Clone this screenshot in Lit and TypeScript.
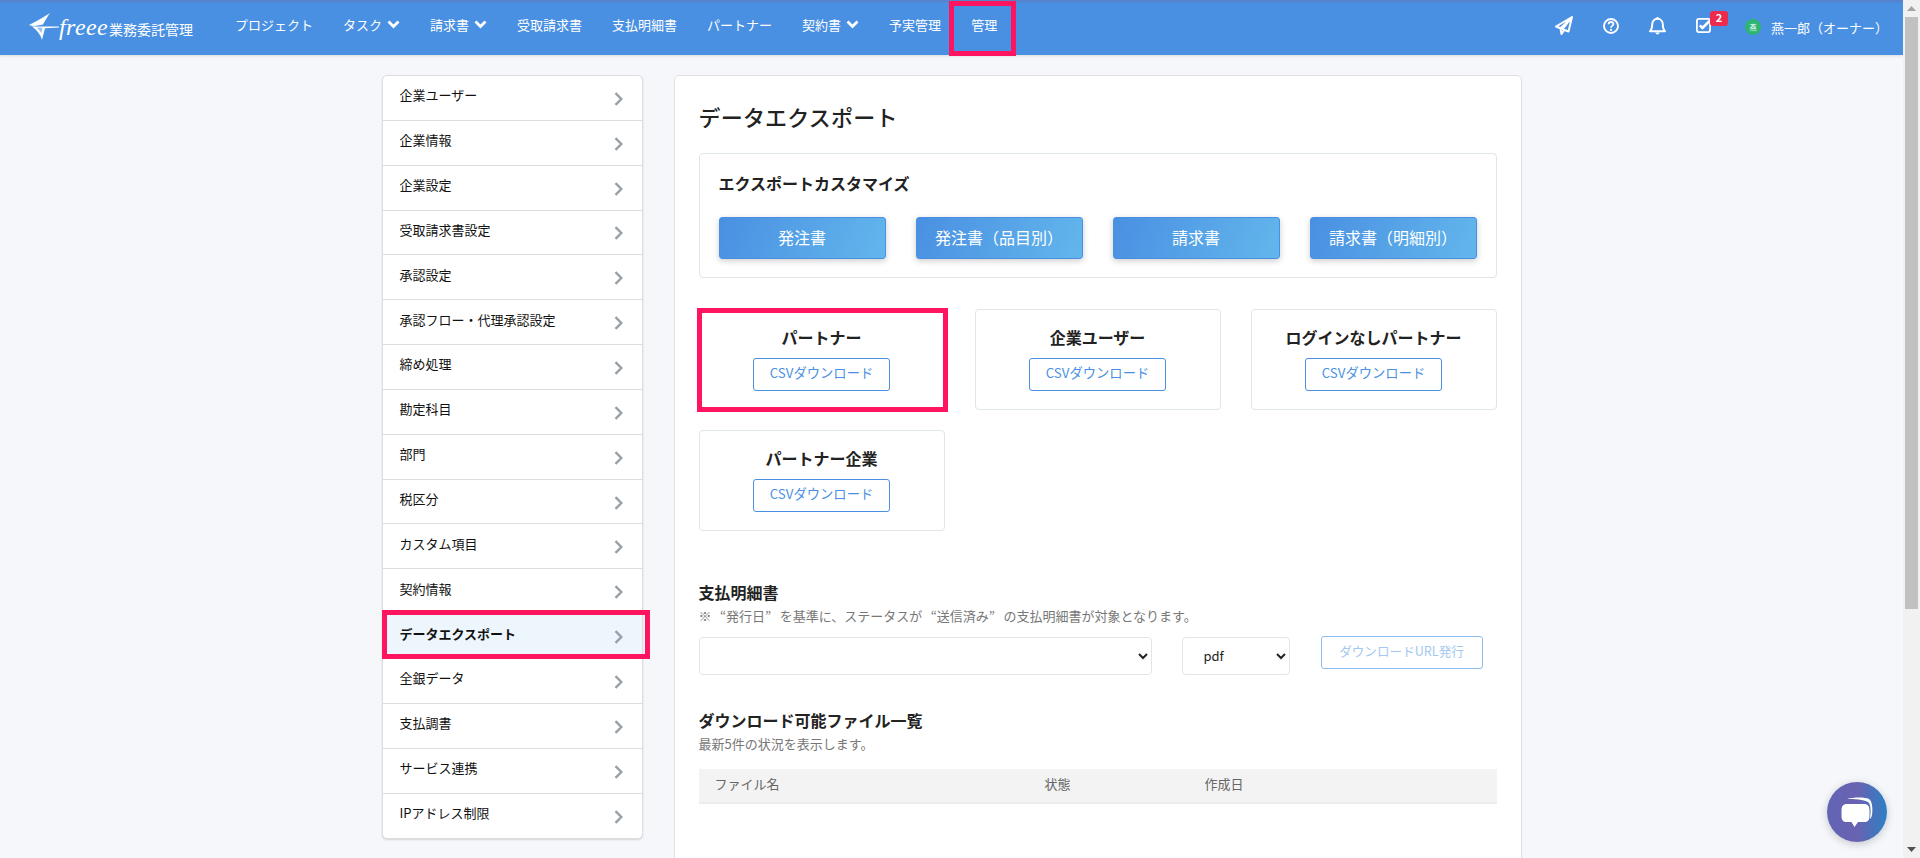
import { LitElement, html, css, svg } from 'lit';
import { customElement } from 'lit/decorators.js';

const NAV = [
  { label: 'プロジェクト' },
  { label: 'タスク', menu: true },
  { label: '請求書', menu: true },
  { label: '受取請求書' },
  { label: '支払明細書' },
  { label: 'パートナー' },
  { label: '契約書', menu: true },
  { label: '予実管理' },
  { label: '管理', marked: true },
];

const SIDE = [
  '企業ユーザー', '企業情報', '企業設定', '受取請求書設定', '承認設定',
  '承認フロー・代理承認設定', '締め処理', '勘定科目', '部門', '税区分',
  'カスタム項目', '契約情報', 'データエクスポート', '全銀データ', '支払調書',
  'サービス連携', 'IPアドレス制限',
];

const CUSTOM = ['発注書', '発注書（品目別）', '請求書', '請求書（明細別）'];
const EXPORTS = ['パートナー', '企業ユーザー', 'ログインなしパートナー', 'パートナー企業'];

const chevronDown = svg`<svg class="caret" width="13" height="9" viewBox="0 0 13 9"><path d="M1.500 1.500 6.500 6.500 11.500 1.500" fill="none" stroke="#fff" stroke-width="2.800"/></svg>`;
const chevronRight = svg`<svg class="arrow" width="9" height="14" viewBox="0 0 9 14"><path d="M1.500 1.200 7.300 7 1.500 12.800" fill="none" stroke="#98a0a8" stroke-width="2.400"/></svg>`;

@customElement('app-root')
export class AppRoot extends LitElement {
  static styles = css`
    :host {
      display: block;
      height: 100vh;
      overflow: hidden;
      font-family: "Noto Sans CJK JP", "Noto Sans", sans-serif;
      font-size: 13px;
      color: #222;
    }

    .page {
      display: flex;
      height: 100%;
      position: relative;
      background: #f5f7fb;
    }

    .content {
      flex: 1;
      min-width: 0;
      overflow: hidden;
    }

    .header {
      display: flex;
      align-items: center;
      height: 55px;
      background: linear-gradient(#5a7fc4 0, #4a8de0 3px, #4a90e2 5px);
      box-shadow: 0 1px 3px rgba(0, 0, 0, .12);
      color: #fff;
    }

    .logo {
      display: flex;
      align-items: center;
      width: 220px;
      padding-left: 29px;
      box-sizing: border-box;
      flex: none;
    }

    .logo svg {
      flex: none;
    }

    .freee {
      font-family: "Liberation Serif", serif;
      font-style: italic;
      font-size: 24px;
      line-height: 1;
      letter-spacing: .4px;
      width: 50px;
      margin-top: -1px;
    }

    .logo-name {
      font-size: 14px;
      line-height: 20px;
      margin-top: 2px;
    }

    .nav {
      display: flex;
      height: 100%;
    }

    .nav-item {
      display: flex;
      align-items: center;
      gap: 5px;
      padding: 0 15px 6px;
      position: relative;
      height: 55px;
      box-sizing: border-box;
      white-space: nowrap;
    }

    .mark {
      position: absolute;
      border: 5px solid #ff1460;
      box-sizing: border-box;
      pointer-events: none;
    }

    .nav-item .mark {
      left: -7px;
      right: -4px;
      top: 1px;
      bottom: -1px;
    }

    .tools {
      display: flex;
      align-items: center;
      gap: 30px;
      margin-left: auto;
      padding: 0 15px 4px 0;
    }

    .check {
      position: relative;
      display: flex;
      margin-right: 4px;
    }

    .badge {
      position: absolute;
      left: 14px;
      top: -7px;
      width: 18px;
      height: 15px;
      border-radius: 3px;
      background: #ee2a4e;
      font-size: 11px;
      font-weight: 700;
      line-height: 13px;
      text-align: center;
    }

    .user {
      display: flex;
      align-items: center;
      gap: 10px;
      font-size: 13px;
      margin-top: 3px;
    }

    .avatar {
      width: 16px;
      height: 16px;
      border-radius: 50%;
      background: #2fb573;
      font-size: 7px;
      line-height: 16px;
      text-align: center;
    }

    .body {
      display: flex;
      justify-content: center;
      gap: 31px;
      padding-top: 20px;
    }

    .side {
      width: 261px;
      flex: none;
      align-self: flex-start;
      background: #fff;
      border: 1px solid #ddd;
      border-radius: 5px;
      box-shadow: 0 1px 2px rgba(0, 0, 0, .14);
      box-sizing: border-box;
    }

    .side-row {
      display: flex;
      align-items: center;
      justify-content: space-between;
      height: 44.85px;
      box-sizing: border-box;
      padding: 0 19px 0 17px;
      border-bottom: 1px solid #ddd;
      position: relative;
      color: #111;
    }

    .side-row:last-child {
      border-bottom: 0;
    }

    .side-row span {
      margin-bottom: 6px;
    }

    .arrow {
      margin-top: 2px;
    }

    .side-row.active {
      background: #eef6fd;
      font-weight: 700;
    }

    .side-row .mark {
      left: -1px;
      right: -8px;
      top: -4px;
      bottom: -1px;
    }

    .main {
      width: 848px;
      flex: none;
      background: #fff;
      border: 1px solid #e0e0e0;
      border-radius: 5px;
      box-sizing: border-box;
      padding: 24px 24px 60px;
      min-height: 800px;
    }

    h1 {
      margin: 0 0 19px;
      padding-bottom: 2px;
      height: 32px;
      font-size: 22px;
      font-weight: 500;
      letter-spacing: .2px;
      line-height: 32px;
      color: #222;
    }

    .box {
      border: 1px solid #dfe6e6;
      border-radius: 4px;
      padding: 19px 19px 18px;
    }

    h2 {
      margin: 0;
      font-size: 16px;
      font-weight: 700;
      line-height: 20px;
      color: #222;
    }

    .custom-buttons {
      display: grid;
      grid-template-columns: repeat(4, 1fr);
      gap: 30px;
      margin-top: 24px;
    }

    .primary {
      height: 42px;
      padding: 0 0 3px;
      border: 1px solid #4a90e2;
      border-radius: 3px;
      background: linear-gradient(110deg, #4a90e2, #62b6ec);
      box-shadow: 0 2px 6px rgba(0, 0, 0, .2);
      color: #fff;
      font: inherit;
      font-size: 16px;
      white-space: nowrap;
    }

    .exports {
      display: grid;
      grid-template-columns: repeat(3, 1fr);
      gap: 20px 30px;
      margin-top: 31px;
    }

    .export-card {
      position: relative;
      display: flex;
      flex-direction: column;
      align-items: center;
      height: 101px;
      box-sizing: border-box;
      padding-top: 17px;
      border: 1px solid #dfe6e6;
      border-radius: 4px;
    }

    .export-card .mark {
      left: -3px;
      right: -4px;
      top: -2px;
      bottom: -3px;
    }

    .outline {
      height: 33px;
      margin-top: 11px;
      border: 1px solid #4a90e2;
      border-radius: 3px;
      background: #fff;
      color: #4a90e2;
      font: inherit;
      font-size: 13.300px;
      width: 137px;
      padding: 0 0 4px;
      white-space: nowrap;
    }

    .section {
      margin-top: 51px;
    }

    .note {
      margin: 5px 0 0;
      font-size: 13px;
      line-height: 18px;
      color: #777;
    }

    .note.wide {
      word-spacing: 5.500px;
    }

    .controls {
      display: flex;
      align-items: flex-start;
      gap: 30px;
      margin-top: 12px;
    }

    select {
      height: 38px;
      background: #fff;
      border: 1px solid #dfe6e6;
      border-radius: 4px;
      padding: 0 0 2px 17px;
      font: inherit;
      color: #222;
    }

    .month {
      width: 453px;
    }

    .format {
      width: 108px;
    }

    .outline.off {
      width: 162px;
      margin: -1px 0 0 1px;
      font-size: 12.600px;
      color: #a5c8f1;
      border-color: #8fbcee;
    }

    .files {
      margin-top: 35px;
    }

    table {
      width: 100%;
      margin-top: 16px;
      border-collapse: collapse;
      table-layout: fixed;
    }

    th {
      box-sizing: border-box;
      height: 34px;
      padding: 0 0 4px 16px;
      background: #f3f3f3;
      border-bottom: 2px solid #ececec;
      color: #666;
      font-size: 13px;
      font-weight: 400;
      text-align: left;
    }

    .col-name {
      width: 330px;
    }

    .col-state {
      width: 160px;
    }

    .scrollbar {
      width: 17px;
      flex: none;
      display: flex;
      flex-direction: column;
      align-items: center;
      background: #f1f1f1;
    }

    .scroll-btn {
      height: 17px;
      flex: none;
      display: flex;
      align-items: center;
      justify-content: center;
    }

    .thumb {
      width: 13px;
      height: 592px;
      background: #c1c1c1;
    }

    .scroll-space {
      flex: 1;
    }

    .chat {
      position: absolute;
      right: 33px;
      bottom: 16px;
      width: 60px;
      height: 60px;
      border-radius: 50%;
      background: linear-gradient(90deg, #6164b4, #6a62b2 50%, #2c80c3);
      box-shadow: 0 2px 8px rgba(0, 0, 0, .2);
    }
  `;

  renderLogo() {
    return html`
      <div class="logo">
        <svg width="30" height="29" viewBox="0 0 30 29">
          <path d="M0 12C8 8 15 4 21 0 18 4 16 8 14 11.500L4 13.200Z" fill="#fff"/>
          <path d="M3 13.500H30V14.500L16 15.200C15 19 14 23 13 27 11.500 21 7 16.500 3 13.500Z" fill="#fff"/>
          <path d="M8 14.500 13.500 14.800 12.500 20Z" fill="#4a90e2" opacity=".55"/>
        </svg>
        <span class="freee">freee</span>
        <span class="logo-name">業務委託管理</span>
      </div>
    `;
  }

  renderTools() {
    return html`
      <div class="tools">
        <svg width="18" height="19" viewBox="0 0 18 19" fill="none" stroke="#fff" stroke-width="2" stroke-linejoin="round">
          <path d="M17 1 1 10.500 5.500 12.300 15 3.500 7.500 13.300 13.500 15.500Z"/>
          <path d="M5.500 12.300 6.500 18 9.300 14"/>
        </svg>
        <svg width="16" height="16" viewBox="0 0 16 16" fill="none" stroke="#fff">
          <circle cx="8" cy="8" r="7" stroke-width="1.900"/>
          <path d="M5.600 6.200C5.700 4.700 6.700 4 8 4c1.400 0 2.400.8 2.400 2 0 1.900-2.400 1.800-2.400 3.700" stroke-width="1.800"/>
          <circle cx="8" cy="11.900" r="1.100" fill="#fff" stroke="none"/>
        </svg>
        <svg width="17" height="19" viewBox="0 0 17 19" fill="none" stroke="#fff" stroke-width="1.900" stroke-linejoin="round">
          <path d="M1 15.200C3 13.400 3.200 11.500 3.200 8.500 3.200 5 5.500 2.800 8.500 2.800s5.300 2.200 5.300 5.700c0 3 .2 4.900 2.200 6.700Z"/>
          <path d="M8.500 1v1.800"/>
          <path d="M6.300 16.500c.3 1.200 1.100 1.900 2.200 1.900s1.900-.7 2.200-1.900" fill="#fff" stroke="none"/>
        </svg>
        <div class="check">
          <svg width="15" height="15" viewBox="0 0 15 15" fill="none" stroke="#fff">
            <rect x=".9" y=".9" width="13.200" height="13.200" rx="2" stroke-width="1.800"/>
            <path d="M3.800 7.300 6.500 10 13.500 3" stroke-width="2.600"/>
          </svg>
          <span class="badge">2</span>
        </div>
        <div class="user">
          <span class="avatar">燕</span>
          <span>燕一郎（オーナー）</span>
        </div>
      </div>
    `;
  }

  render() {
    return html`
      <div class="page">
        <div class="content">
          <header class="header">
            ${this.renderLogo()}
            <nav class="nav">
              ${NAV.map((item) => html`
                <div class="nav-item">
                  <span>${item.label}</span>
                  ${item.menu ? chevronDown : ''}
                  ${item.marked ? html`<i class="mark"></i>` : ''}
                </div>
              `)}
            </nav>
            ${this.renderTools()}
          </header>

          <div class="body">
            <aside class="side">
              ${SIDE.map((label) => {
                const active = label === 'データエクスポート';
                return html`
                  <div class="side-row ${active ? 'active' : ''}">
                    <span>${label}</span>
                    ${chevronRight}
                    ${active ? html`<i class="mark"></i>` : ''}
                  </div>
                `;
              })}
            </aside>

            <main class="main">
              <h1>データエクスポート</h1>

              <div class="box">
                <h2>エクスポートカスタマイズ</h2>
                <div class="custom-buttons">
                  ${CUSTOM.map((label) => html`<button class="primary">${label}</button>`)}
                </div>
              </div>

              <div class="exports">
                ${EXPORTS.map((label, i) => html`
                  <div class="export-card">
                    <h2>${label}</h2>
                    <button class="outline">CSVダウンロード</button>
                    ${i === 0 ? html`<i class="mark"></i>` : ''}
                  </div>
                `)}
              </div>

              <section class="section">
                <h2>支払明細書</h2>
                <p class="note wide">※ “発行日” を基準に、ステータスが “送信済み” の支払明細書が対象となります。</p>
                <div class="controls">
                  <select class="month"><option></option></select>
                  <select class="format"><option>pdf</option></select>
                  <button class="outline off">ダウンロードURL発行</button>
                </div>
              </section>

              <section class="files">
                <h2>ダウンロード可能ファイル一覧</h2>
                <p class="note">最新5件の状況を表示します。</p>
                <table>
                  <thead>
                    <tr>
                      <th class="col-name">ファイル名</th>
                      <th class="col-state">状態</th>
                      <th>作成日</th>
                    </tr>
                  </thead>
                </table>
              </section>
            </main>
          </div>
        </div>

        <div class="scrollbar">
          <div class="scroll-btn">
            <svg width="9" height="5" viewBox="0 0 9 5"><path d="M4.500 0 9 5H0Z" fill="#a3a3a3"/></svg>
          </div>
          <div class="thumb"></div>
          <div class="scroll-space"></div>
          <div class="scroll-btn">
            <svg width="9" height="5" viewBox="0 0 9 5"><path d="M0 0H9L4.500 5Z" fill="#505050"/></svg>
          </div>
        </div>

        <div class="chat">
          <svg width="60" height="60" viewBox="0 0 60 60">
            <path d="M20 17C27 15 38 15 42 17 45 19 46 26 45 33 44.500 35 44 36 43 37 44 29 44 22 41 20 37 17.500 27 17 20 17Z" fill="#fff"/>
            <path d="M20 22H37C41 22 42.500 24 42.500 29V34C42.500 38 41 40 37 40H31L27.500 45 24.500 40H20C16 40 14.500 38 14.500 34V29C14.500 24 16 22 20 22Z" fill="#fff"/>
          </svg>
        </div>
      </div>
    `;
  }
}
